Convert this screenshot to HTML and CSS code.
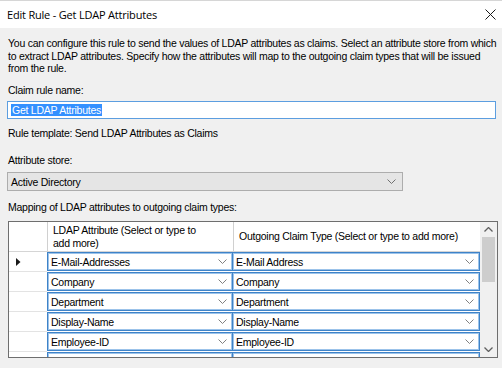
FILE: index.html
```html
<!DOCTYPE html>
<html>
<head>
<meta charset="utf-8">
<link rel="stylesheet" href="styles.css">
</head>
<body>
<div class="window">
  <div class="titlebar">
    <span class="title">Edit Rule - Get LDAP Attributes</span>
    <svg class="close" width="11" height="11" viewBox="0 0 11 11"><path d="M0.5 0.5 L10.5 10.5 M10.5 0.5 L0.5 10.5" stroke="#1a1a1a" stroke-width="1" fill="none"/></svg>
  </div>
  <div class="content">
    <p class="desc">You can configure this rule to send the values of LDAP attributes as claims. Select an attribute store from which<br>to extract LDAP attributes. Specify how the attributes will map to the outgoing claim types that will be issued<br>from the rule.</p>
    <div class="label l-claim">Claim rule name:</div>
    <div class="textbox"><span class="sel">Get LDAP Attributes</span></div>
    <div class="label l-template">Rule template: Send LDAP Attributes as Claims</div>
    <div class="label l-store">Attribute store:</div>
    <div class="combo"><span>Active Directory</span><svg class="chev" width="9" height="5" viewBox="0 0 9 5"><path d="M0.5 0.5 L4.5 4.5 L8.5 0.5" stroke="#707070" fill="none"/></svg></div>
    <div class="label l-map">Mapping of LDAP attributes to outgoing claim types:</div>
    <div class="grid">
      <div class="table">
        <div class="row head">
          <div class="rh"></div>
          <div class="hc hc1">LDAP Attribute (Select or type to<br>add more)</div>
          <div class="hc hc2">Outgoing Claim Type (Select or type to add more)</div>
        </div>
        <div class="row">
          <div class="rh"><svg width="5" height="8" viewBox="0 0 5 8"><path d="M0 0 L4.5 4 L0 8 Z" fill="#1a1a1a"/></svg></div>
          <div class="cell c1"><span>E-Mail-Addresses</span><svg class="chev" width="9" height="5" viewBox="0 0 9 5"><path d="M0.5 0.5 L4.5 4.5 L8.5 0.5" stroke="#808080" fill="none"/></svg></div>
          <div class="cell c2"><span>E-Mail Address</span><svg class="chev" width="9" height="5" viewBox="0 0 9 5"><path d="M0.5 0.5 L4.5 4.5 L8.5 0.5" stroke="#808080" fill="none"/></svg></div>
        </div>
        <div class="row">
          <div class="rh"></div>
          <div class="cell c1"><span>Company</span><svg class="chev" width="9" height="5" viewBox="0 0 9 5"><path d="M0.5 0.5 L4.5 4.5 L8.5 0.5" stroke="#808080" fill="none"/></svg></div>
          <div class="cell c2"><span>Company</span><svg class="chev" width="9" height="5" viewBox="0 0 9 5"><path d="M0.5 0.5 L4.5 4.5 L8.5 0.5" stroke="#808080" fill="none"/></svg></div>
        </div>
        <div class="row">
          <div class="rh"></div>
          <div class="cell c1"><span>Department</span><svg class="chev" width="9" height="5" viewBox="0 0 9 5"><path d="M0.5 0.5 L4.5 4.5 L8.5 0.5" stroke="#808080" fill="none"/></svg></div>
          <div class="cell c2"><span>Department</span><svg class="chev" width="9" height="5" viewBox="0 0 9 5"><path d="M0.5 0.5 L4.5 4.5 L8.5 0.5" stroke="#808080" fill="none"/></svg></div>
        </div>
        <div class="row">
          <div class="rh"></div>
          <div class="cell c1"><span>Display-Name</span><svg class="chev" width="9" height="5" viewBox="0 0 9 5"><path d="M0.5 0.5 L4.5 4.5 L8.5 0.5" stroke="#808080" fill="none"/></svg></div>
          <div class="cell c2"><span>Display-Name</span><svg class="chev" width="9" height="5" viewBox="0 0 9 5"><path d="M0.5 0.5 L4.5 4.5 L8.5 0.5" stroke="#808080" fill="none"/></svg></div>
        </div>
        <div class="row">
          <div class="rh"></div>
          <div class="cell c1"><span>Employee-ID</span><svg class="chev" width="9" height="5" viewBox="0 0 9 5"><path d="M0.5 0.5 L4.5 4.5 L8.5 0.5" stroke="#808080" fill="none"/></svg></div>
          <div class="cell c2"><span>Employee-ID</span><svg class="chev" width="9" height="5" viewBox="0 0 9 5"><path d="M0.5 0.5 L4.5 4.5 L8.5 0.5" stroke="#808080" fill="none"/></svg></div>
        </div>
        <div class="row">
          <div class="rh"></div>
          <div class="cell c1"></div>
          <div class="cell c2"></div>
        </div>
      </div>
      <div class="scrollbar">
        <div class="sb-btn"><svg width="9" height="5" viewBox="0 0 9 5"><path d="M0.5 4.5 L4.5 0.5 L8.5 4.5" stroke="#606060" stroke-width="1.3" fill="none"/></svg></div>
        <div class="sb-track"><div class="thumb"></div></div>
        <div class="sb-btn"><svg width="9" height="5" viewBox="0 0 9 5"><path d="M0.5 0.5 L4.5 4.5 L8.5 0.5" stroke="#606060" stroke-width="1.3" fill="none"/></svg></div>
      </div>
    </div>
  </div>
</div>
</body>
</html>
```

FILE: styles.css
```css
html, body {
  margin: 0;
  padding: 0;
}
body {
  width: 502px;
  height: 368px;
  overflow: hidden;
  background: #f0f0f0;
  font-family: "Liberation Sans", Arial, sans-serif;
  font-size: 10.5px;
  letter-spacing: -0.25px;
  color: #000;
}
.window {
  display: flex;
  flex-direction: column;
  height: 368px;
}
.titlebar {
  height: 27px;
  border-top: 1px solid #d6d6d6;
  background: #fff;
  display: flex;
  align-items: center;
  justify-content: space-between;
  padding: 0 6px 0 7px;
}
.title {
  font-family: "Open Sans", "Noto Sans", sans-serif;
  font-size: 11px;
  letter-spacing: -0.2px;
  color: #000;
  margin-top: -1px;
}
.close {
  margin-top: -1px;
}
.content {
  display: flex;
  flex-direction: column;
  padding: 0 4px 0 7px;
}
.desc {
  margin: 9px 0 0 1px;
  line-height: 12.5px;
  height: 37.5px;
  white-space: nowrap;
}
.label {
  line-height: 13px;
  padding-left: 1px;
  white-space: nowrap;
}
.l-claim { margin-top: 9.5px; }
.textbox {
  margin-top: 4px;
  margin-right: 2px;
  height: 16px;
  border: 1px solid #5c9ee0;
  background: #fff;
  display: flex;
  align-items: center;
  padding-left: 3px;
}
.sel {
  background: #3390ff;
  color: #fff;
  line-height: 12px;
  padding: 0 1px;
}
.l-template { margin-top: 8px; }
.l-store { margin-top: 14px; }
.combo {
  margin-top: 5px;
  width: 385px;
  height: 17px;
  border: 1px solid #adadad;
  background: #e5e5e5;
  display: flex;
  align-items: center;
  justify-content: space-between;
  padding: 0 6px 0 3px;
}
.l-map { margin-top: 10px; }
.grid {
  margin-top: 7px;
  margin-left: 1px;
  height: 135px;
  border: 1px solid #6e6e6e;
  display: flex;
  background: #fff;
  overflow: hidden;
}
.table {
  width: 471px;
  display: flex;
  flex-direction: column;
}
.row {
  display: grid;
  grid-template-columns: 38px 186px 247px;
  height: 20px;
  flex: none;
}
.row.head {
  height: 29px;
  border-bottom: 1px solid #d5d5d5;
}
.hc {
  border-left: 1px solid #d0d0d0;
  display: flex;
  align-items: center;
  line-height: 13px;
  white-space: nowrap;
}
.hc1 { padding-left: 5px; padding-top: 1px; }
.hc2 { padding-left: 5px; }
.rh {
  border-bottom: 1px solid #e3e3e3;
  display: flex;
  align-items: center;
  padding-left: 7px;
}
.head .rh { border-bottom: none; }
.cell {
  height: 19px;
  box-sizing: border-box;
  border: 1px solid #3f83c8;
  box-shadow: inset 0 0 0 1px #9cc3ea;
  background: #fff;
  display: flex;
  align-items: center;
  justify-content: space-between;
  padding: 0 5px 0 3px;
  margin-bottom: 1px;
  white-space: nowrap;
}
.c2 { margin-left: -1px; }
.scrollbar {
  width: 17px;
  background: #f0f0f0;
  display: flex;
  flex-direction: column;
}
.sb-btn {
  height: 15px;
  display: flex;
  align-items: center;
  justify-content: center;
  flex: none;
}
.sb-track {
  flex: 1;
  padding: 0 2px;
}
.thumb {
  height: 45px;
  background: #cdcdcd;
}
```
